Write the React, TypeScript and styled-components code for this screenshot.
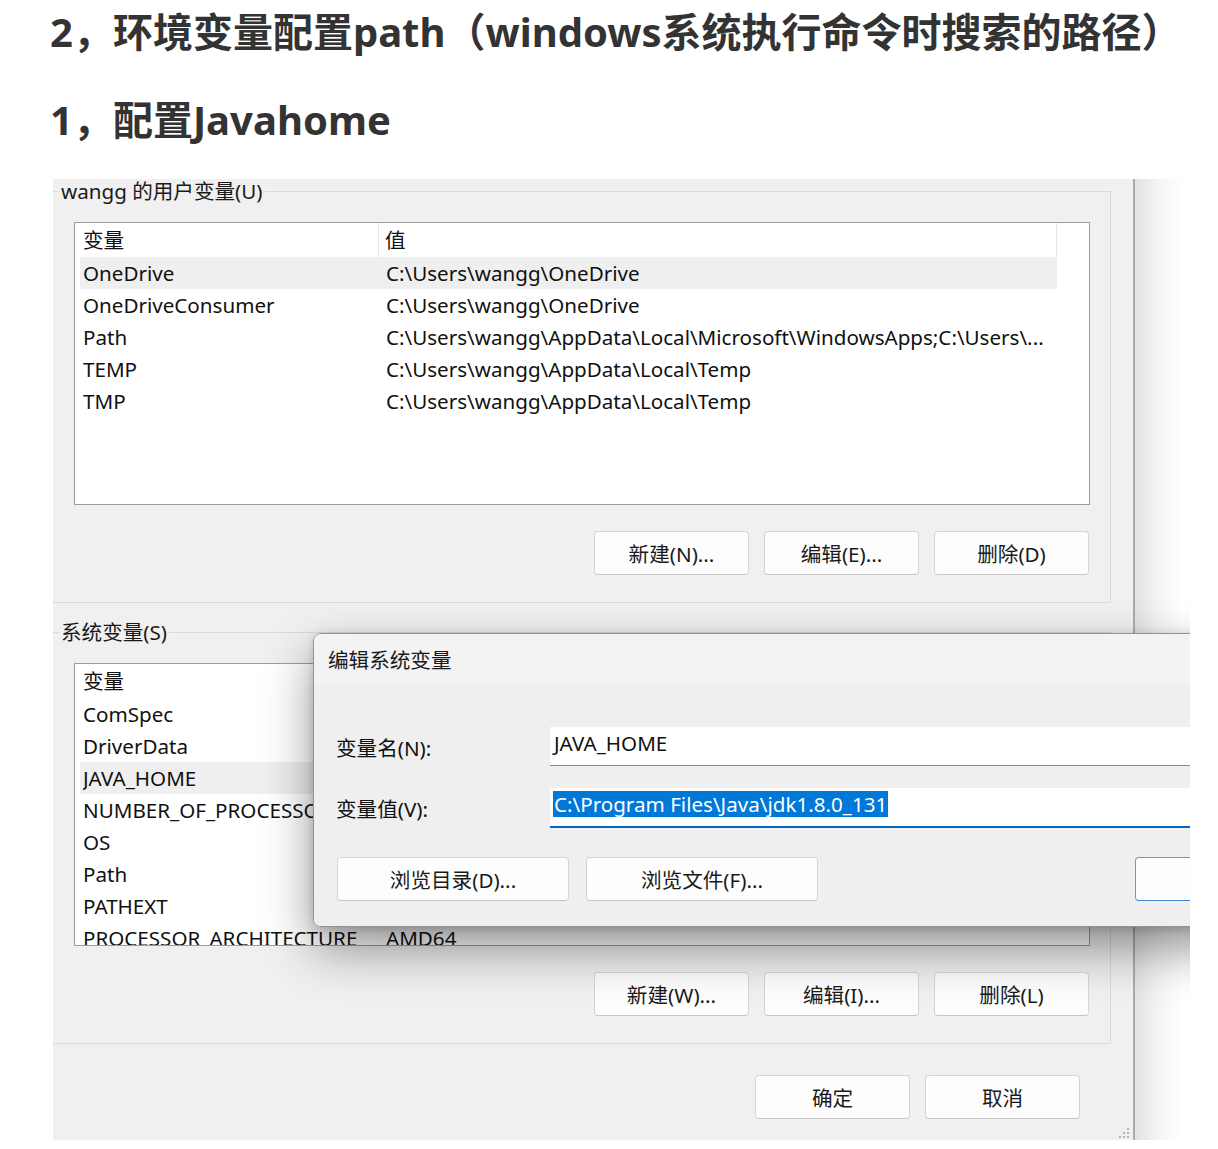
import React from 'react';
import styled, { createGlobalStyle } from 'styled-components';

const GlobalStyle = createGlobalStyle`
  html, body {
    margin: 0;
    padding: 0;
    background: #fff;
  }
  body {
    font-family: "Noto Sans", "Noto Sans CJK SC", sans-serif;
    color: #111;
  }
  * { box-sizing: border-box; }
`;

const Page = styled.div`
  width: 1218px;
  padding-bottom: 9px;
`;

const Heading = styled.h2`
  margin: 0;
  padding-left: 50px;
  font-family: "Noto Sans", "Noto Sans CJK SC", sans-serif;
  font-size: 40px;
  font-weight: 700;
  line-height: 64px;
  color: #333;
  white-space: nowrap;

  & + & { margin-top: 24px; }
`;

/* the pasted screenshot */
const Shot = styled.div`
  position: relative;
  margin: 27px 0 0 53px;
  width: 1137px;
  height: 961px;
  overflow: hidden;
  display: flex;
  font-size: 20.6px;
`;

const Win = styled.div`
  position: relative;
  flex: none;
  width: 1082px;
  height: 100%;
  background: #f0f0f0;
  border-right: 2px solid #acacac;
  display: flex;
  flex-direction: column;
`;

const Backdrop = styled.div`
  flex: 1;
  background: linear-gradient(to right, #e2e2e2, #f3f3f3 40%, #fff 85%);
`;

const Group = styled.fieldset<{ $gap?: number }>`
  margin: ${p => p.$gap ?? 0}px 0 0 -2px;
  width: 1060px;
  min-width: 0;
  padding: 19px 20px 27px 22px;
  border: 1px solid #dadada;
`;

const Legend = styled.legend`
  margin-left: -15px;
  padding: 0 2px;
  font-size: 20.6px;
  line-height: 24px;
  color: #1a1a1a;
`;

const ListBox = styled.div`
  height: 283px;
  background: #fff;
  border: 1px solid #9c9c9c;
  overflow: hidden;
`;

const HeadRow = styled.div`
  display: grid;
  grid-template-columns: 299px 1fr;
  margin-left: 5px;
  width: 977px;
  height: 34px;
  line-height: 35px;
`;

const HeadCell = styled.div<{ $first?: boolean }>`
  padding-left: ${p => (p.$first ? 3 : 6)}px;
  border-right: 1px solid #e6e6e6;
`;

const Row = styled.div<{ $selected?: boolean }>`
  display: grid;
  grid-template-columns: 303px 1fr;
  margin-left: 5px;
  width: 977px;
  height: 32px;
  line-height: 33px;
  padding-left: 3px;
  background: ${p => (p.$selected ? '#efefef' : 'transparent')};
  white-space: nowrap;
`;

const Cell = styled.div`
  overflow: hidden;
`;

const ButtonRow = styled.div<{ $top: number; $right?: number }>`
  display: flex;
  justify-content: flex-end;
  gap: 15px;
  margin-top: ${p => p.$top}px;
  padding-right: ${p => p.$right ?? 1}px;
`;

const Button = styled.div<{ $w?: number; $default?: boolean }>`
  width: ${p => p.$w ?? 155}px;
  height: 44px;
  display: flex;
  align-items: center;
  justify-content: center;
  background: #fdfdfd;
  border: 1px solid ${p => (p.$default ? '#5b9bdc' : '#d5d5d5')};
  border-bottom-color: ${p => (p.$default ? '#3f86d2' : '#c6c6c6')};
  border-radius: 4px;
  font-size: 20.6px;
  color: #1a1a1a;
  white-space: nowrap;
`;

const Grip = styled.svg`
  position: absolute;
  right: 3px;
  bottom: 1px;
`;

/* dialog floating over the window */
const Dialog = styled.div`
  position: absolute;
  left: 260px;
  top: 454px;
  width: 1326px;
  height: 294px;
  display: flex;
  flex-direction: column;
  border: 1px solid #939393;
  border-radius: 8px;
  overflow: hidden;
  box-shadow: 0 22px 50px rgba(0, 0, 0, 0.42), 0 2px 10px rgba(0, 0, 0, 0.16);
`;

const TitleBar = styled.div`
  height: 49px;
  flex: none;
  display: flex;
  align-items: center;
  padding-left: 14px;
  background: #f3f3f3;
  color: #1a1a1a;
`;

const DialogBody = styled.div`
  flex: 1;
  background: #efefef;
  padding: 44px 22px 0;
`;

const Field = styled.div<{ $gap?: number }>`
  display: grid;
  grid-template-columns: 214px 1fr;
  align-items: center;
  margin-top: ${p => p.$gap ?? 0}px;
`;

const Input = styled.div<{ $focused?: boolean }>`
  height: ${p => (p.$focused ? 40 : 39)}px;
  padding: 3px 0 0 ${p => (p.$focused ? 3 : 4)}px;
  line-height: 26px;
  background: #fff;
  border-bottom: ${p => (p.$focused ? '2px solid #0067c0' : '1px solid #8a8a8a')};
  white-space: nowrap;
`;

const Selected = styled.span`
  display: inline-block;
  padding: 0 1px;
  background: #0078d7;
  color: #fff;
`;

const DialogButtons = styled.div`
  display: flex;
  gap: 17px;
  margin: 29px 0 0 1px;
`;

const Spacer = styled.div`
  flex: 1;
`;

const userVars = [
  ['OneDrive', 'C:\\Users\\wangg\\OneDrive'],
  ['OneDriveConsumer', 'C:\\Users\\wangg\\OneDrive'],
  ['Path', 'C:\\Users\\wangg\\AppData\\Local\\Microsoft\\WindowsApps;C:\\Users\\...'],
  ['TEMP', 'C:\\Users\\wangg\\AppData\\Local\\Temp'],
  ['TMP', 'C:\\Users\\wangg\\AppData\\Local\\Temp'],
];

const sysVars = [
  ['ComSpec', 'C:\\WINDOWS\\system32\\cmd.exe'],
  ['DriverData', 'C:\\Windows\\System32\\Drivers\\DriverData'],
  ['JAVA_HOME', 'C:\\Program Files\\Java\\jdk1.8.0_131'],
  ['NUMBER_OF_PROCESSORS', '16'],
  ['OS', 'Windows_NT'],
  ['Path', 'C:\\Program Files\\Common Files\\Oracle\\Java\\javapath;...'],
  ['PATHEXT', '.COM;.EXE;.BAT;.CMD;.VBS;.VBE;.JS;.JSE;.WSF;.WSH;.MSC'],
  ['PROCESSOR_ARCHITECTURE', 'AMD64'],
];

const VarList: React.FC<{ rows: string[][]; selected: number }> = ({ rows, selected }) => (
  <ListBox>
    <HeadRow>
      <HeadCell $first>变量</HeadCell>
      <HeadCell>值</HeadCell>
    </HeadRow>
    {rows.map(([name, value], i) => (
      <Row key={name} $selected={i === selected}>
        <Cell>{name}</Cell>
        <Cell>{value}</Cell>
      </Row>
    ))}
  </ListBox>
);

export default function App() {
  return (
    <Page>
      <GlobalStyle />
      <Heading>2，环境变量配置path（windows系统执行命令时搜索的路径）</Heading>
      <Heading>1，配置Javahome</Heading>

      <Shot>
        <Win>
          <Group>
            <Legend>wangg 的用户变量(U)</Legend>
            <VarList rows={userVars} selected={0} />
            <ButtonRow $top={26}>
              <Button>新建(N)...</Button>
              <Button>编辑(E)...</Button>
              <Button>删除(D)</Button>
            </ButtonRow>
          </Group>

          <Group $gap={17}>
            <Legend>系统变量(S)</Legend>
            <VarList rows={sysVars} selected={2} />
            <ButtonRow $top={26}>
              <Button>新建(W)...</Button>
              <Button>编辑(I)...</Button>
              <Button>删除(L)</Button>
            </ButtonRow>
          </Group>

          <ButtonRow $top={31} $right={53}>
            <Button>确定</Button>
            <Button>取消</Button>
          </ButtonRow>

          <Grip width="12" height="12" viewBox="0 0 12 12">
            {[[10, 2], [10, 6], [6, 6], [10, 10], [6, 10], [2, 10]].map(([x, y]) => (
              <rect key={`${x}-${y}`} x={x - 1} y={y - 1} width="2" height="2" fill="#b4b4b4" />
            ))}
          </Grip>
        </Win>
        <Backdrop />

        <Dialog>
          <TitleBar>编辑系统变量</TitleBar>
          <DialogBody>
            <Field>
              <span>变量名(N):</span>
              <Input>JAVA_HOME</Input>
            </Field>
            <Field $gap={22}>
              <span>变量值(V):</span>
              <Input $focused>
                <Selected>C:\Program Files\Java\jdk1.8.0_131</Selected>
              </Input>
            </Field>
            <DialogButtons>
              <Button $w={232}>浏览目录(D)...</Button>
              <Button $w={232}>浏览文件(F)...</Button>
              <Spacer />
              <Button $w={232} $default>确定</Button>
              <Button $w={232}>取消</Button>
            </DialogButtons>
          </DialogBody>
        </Dialog>
      </Shot>
    </Page>
  );
}
